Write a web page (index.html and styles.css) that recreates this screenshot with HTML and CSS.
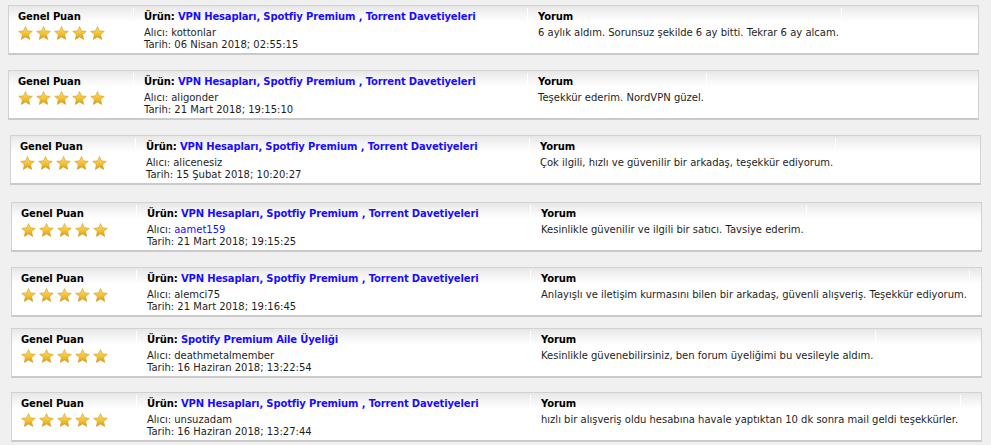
FILE: index.html
```html
<!DOCTYPE html>
<html lang="tr">
<head>
<meta charset="utf-8">
<title>Değerlendirmeler</title>
<link rel="stylesheet" href="styles.css">
</head>
<body>
<svg width="0" height="0" class="defs">
  <defs>
    <linearGradient id="sg" x1="0" y1="0" x2="0" y2="1">
      <stop offset="0" stop-color="#fbe07a"/>
      <stop offset="0.55" stop-color="#f2c230"/>
      <stop offset="1" stop-color="#d99a12"/>
    </linearGradient>
    <symbol id="star" viewBox="0 0 24 23">
      <path d="M12 0.8 L15.2 8 L23.2 8.8 L17.1 14.1 L18.9 22.1 L12 17.9 L5.1 22.1 L6.9 14.1 L0.8 8.8 L8.8 8 Z" fill="url(#sg)" stroke="#d09a30" stroke-width="1" stroke-linejoin="round"/>
    </symbol>
  </defs>
</svg>

<div class="list">
  <div class="card">
    <div class="cell rate"><div class="head">Genel Puan</div><div class="stars"><svg><use href="#star"/></svg><svg><use href="#star"/></svg><svg><use href="#star"/></svg><svg><use href="#star"/></svg><svg><use href="#star"/></svg></div></div>
    <div class="cell prod"><div class="head">Ürün: <a class="lnk" href="#">VPN Hesapları, Spotfiy Premium , Torrent Davetiyeleri</a></div><div class="meta">Alıcı: kottonlar<br>Tarih: 06 Nisan 2018; 02:55:15</div></div>
    <div class="cell comment"><div class="head">Yorum</div><div class="text">6 aylık aldım. Sorunsuz şekilde 6 ay bitti. Tekrar 6 ay alcam.</div></div>
    <div class="cell fill"></div>
  </div>

  <div class="card">
    <div class="cell rate"><div class="head">Genel Puan</div><div class="stars"><svg><use href="#star"/></svg><svg><use href="#star"/></svg><svg><use href="#star"/></svg><svg><use href="#star"/></svg><svg><use href="#star"/></svg></div></div>
    <div class="cell prod"><div class="head">Ürün: <a class="lnk" href="#">VPN Hesapları, Spotfiy Premium , Torrent Davetiyeleri</a></div><div class="meta">Alıcı: aligonder<br>Tarih: 21 Mart 2018; 19:15:10</div></div>
    <div class="cell comment"><div class="head">Yorum</div><div class="text">Teşekkür ederim. NordVPN güzel.</div></div>
    <div class="cell fill"></div>
  </div>

  <div class="card shift2">
    <div class="cell rate"><div class="head">Genel Puan</div><div class="stars"><svg><use href="#star"/></svg><svg><use href="#star"/></svg><svg><use href="#star"/></svg><svg><use href="#star"/></svg><svg><use href="#star"/></svg></div></div>
    <div class="cell prod"><div class="head">Ürün: <a class="lnk" href="#">VPN Hesapları, Spotfiy Premium , Torrent Davetiyeleri</a></div><div class="meta">Alıcı: alicenesiz<br>Tarih: 15 Şubat 2018; 10:20:27</div></div>
    <div class="cell comment"><div class="head">Yorum</div><div class="text">Çok ilgili, hızlı ve güvenilir bir arkadaş, teşekkür ediyorum.</div></div>
    <div class="cell fill"></div>
  </div>

  <div class="card shift3 gap">
    <div class="cell rate"><div class="head">Genel Puan</div><div class="stars"><svg><use href="#star"/></svg><svg><use href="#star"/></svg><svg><use href="#star"/></svg><svg><use href="#star"/></svg><svg><use href="#star"/></svg></div></div>
    <div class="cell prod"><div class="head">Ürün: <a class="lnk" href="#">VPN Hesapları, Spotfiy Premium , Torrent Davetiyeleri</a></div><div class="meta">Alıcı: <a class="lnk plain" href="#">aamet159</a><br>Tarih: 21 Mart 2018; 19:15:25</div></div>
    <div class="cell comment"><div class="head">Yorum</div><div class="text">Kesinlikle güvenilir ve ilgili bir satıcı. Tavsiye ederim.</div></div>
    <div class="cell fill"></div>
  </div>

  <div class="card shift3">
    <div class="cell rate"><div class="head">Genel Puan</div><div class="stars"><svg><use href="#star"/></svg><svg><use href="#star"/></svg><svg><use href="#star"/></svg><svg><use href="#star"/></svg><svg><use href="#star"/></svg></div></div>
    <div class="cell prod"><div class="head">Ürün: <a class="lnk" href="#">VPN Hesapları, Spotfiy Premium , Torrent Davetiyeleri</a></div><div class="meta">Alıcı: alemci75<br>Tarih: 21 Mart 2018; 19:16:45</div></div>
    <div class="cell comment"><div class="head">Yorum</div><div class="text">Anlayışlı ve iletişim kurmasını bilen bir arkadaş, güvenli alışveriş. Teşekkür ediyorum.</div></div>
    <div class="cell fill"></div>
  </div>

  <div class="card shift3 tight">
    <div class="cell rate"><div class="head">Genel Puan</div><div class="stars"><svg><use href="#star"/></svg><svg><use href="#star"/></svg><svg><use href="#star"/></svg><svg><use href="#star"/></svg><svg><use href="#star"/></svg></div></div>
    <div class="cell prod"><div class="head">Ürün: <a class="lnk" href="#">Spotify Premium Aile Üyeliği</a></div><div class="meta">Alıcı: deathmetalmember<br>Tarih: 16 Haziran 2018; 13:22:54</div></div>
    <div class="cell comment"><div class="head">Yorum</div><div class="text">Kesinlikle güvenebilirsiniz, ben forum üyeliğimi bu vesileyle aldım.</div></div>
    <div class="cell fill"></div>
  </div>

  <div class="card shift3 near">
    <div class="cell rate"><div class="head">Genel Puan</div><div class="stars"><svg><use href="#star"/></svg><svg><use href="#star"/></svg><svg><use href="#star"/></svg><svg><use href="#star"/></svg><svg><use href="#star"/></svg></div></div>
    <div class="cell prod"><div class="head">Ürün: <a class="lnk" href="#">VPN Hesapları, Spotfiy Premium , Torrent Davetiyeleri</a></div><div class="meta">Alıcı: unsuzadam<br>Tarih: 16 Haziran 2018; 13:27:44</div></div>
    <div class="cell comment"><div class="head">Yorum</div><div class="text">hızlı bir alışveriş oldu hesabına havale yaptıktan 10 dk sonra mail geldi teşekkürler.</div></div>
    <div class="cell fill"></div>
  </div>
</div>
</body>
</html>
```

FILE: styles.css
```css
html, body {
  background: #f0f0f0;
}
body {
  margin: 5px 0 0 8px;
  font-family: "DejaVu Sans", Verdana, sans-serif;
  font-size: 10px;
  color: #1e1e1e;
  overflow: hidden;
}
.defs {
  position: absolute;
  width: 0;
  height: 0;
}
.list {
  display: flex;
  flex-direction: column;
  gap: 15px;
}
.card {
  box-sizing: border-box;
  width: 971px;
  height: 50px;
  display: flex;
  border: 1px solid #d2d2d2;
  border-bottom: 2px solid #cacaca;
  background: linear-gradient(#e7e7e7 0px, #f6f6f6 9px, #ffffff 16px);
  padding-top: 2px;
}
.card.shift2 { margin-left: 2px; }
.card.shift3 { margin-left: 3px; }
.card.gap { margin-top: 2px; }
.card.tight { margin-top: -4px; }
.card.near { margin-top: -1px; }
.cell {
  border-left: 1px solid #ffffff;
  padding: 3px 0 0 10px;
  box-sizing: border-box;
}
.cell.rate {
  border-left: none;
  width: 124px;
  padding-left: 9px;
}
.cell.prod {
  width: 394px;
}
.cell.comment {
  flex: none;
  padding-right: 2px;
}
.cell.fill {
  flex: 1;
}
.head {
  font-weight: bold;
  color: #000;
  white-space: nowrap;
  line-height: 12px;
  letter-spacing: -0.15px;
}
.lnk {
  color: #1a0dff;
  text-decoration: none;
}
.lnk.plain {
  font-weight: normal;
}
.meta {
  margin-top: 4px;
  line-height: 12px;
  white-space: nowrap;
}
.text {
  margin-top: 4px;
  line-height: 12px;
  white-space: nowrap;
}
.stars {
  display: flex;
  gap: 3px;
  margin-top: 3px;
}
.stars svg {
  width: 15px;
  height: 14px;
  display: block;
}
```
